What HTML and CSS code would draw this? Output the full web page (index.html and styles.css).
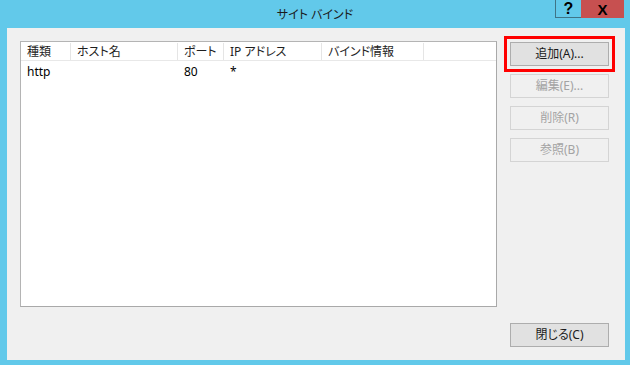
FILE: index.html
```html
<!DOCTYPE html>
<html lang="ja">
<head>
<meta charset="utf-8">
<title>サイト バインド</title>
<link rel="stylesheet" href="styles.css">
</head>
<body>
<div class="window">
  <div class="titlebar">
    <div class="spacer"></div>
    <div class="title">サイト バインド</div>
    <div class="controls">
      <div class="ctl help">?</div>
      <div class="ctl close">X</div>
    </div>
  </div>
  <div class="client">
    <div class="list">
      <div class="row head">
        <div class="cell">種類</div>
        <div class="cell">ホスト名</div>
        <div class="cell">ポート</div>
        <div class="cell">IP アドレス</div>
        <div class="cell">バインド情報</div>
      </div>
      <div class="row item">
        <div class="cell">http</div>
        <div class="cell"></div>
        <div class="cell">80</div>
        <div class="cell">*</div>
        <div class="cell"></div>
      </div>
    </div>
    <div class="side">
      <div class="btn highlight">追加(A)...</div>
      <div class="btn disabled">編集(E)...</div>
      <div class="btn disabled">削除(R)</div>
      <div class="btn disabled">参照(B)</div>
      <div class="btn closebtn">閉じる(C)</div>
    </div>
  </div>
</div>
</body>
</html>
```
FILE: styles.css
```css
html, body {
  margin: 0;
  padding: 0;
}
body {
  width: 630px;
  height: 365px;
  overflow: hidden;
  background: #62c9ea;
  font-family: "Noto Sans", "Noto Sans CJK JP", sans-serif;
  font-size: 12px;
  font-feature-settings: "palt";
  color: #000;
}
.window {
  width: 630px;
  height: 365px;
  display: flex;
  flex-direction: column;
}
.titlebar {
  height: 28px;
  display: grid;
  grid-template-columns: 1fr auto 1fr;
  flex: none;
}
.title {
  padding-top: 7px;
  line-height: 16px;
  font-size: 12px;
  color: #1b1b1b;
}
.controls {
  justify-self: end;
  align-self: start;
  display: flex;
  margin-right: 6px;
}
.ctl {
  height: 18px;
  box-sizing: border-box;
  display: flex;
  align-items: center;
  justify-content: center;
  font-family: "Liberation Sans", sans-serif;
  font-weight: bold;
  color: #000;
}
.help {
  width: 26px;
  border: 1px solid #3f7486;
  border-top: none;
  border-right: none;
  font-size: 16px;
}
.close {
  width: 43px;
  background: #c75050;
  font-size: 15px;
}
.client {
  flex: 1;
  margin: 0 5px 5px 7px;
  background: #f0f0f0;
  display: flex;
  padding: 13px 15px 13px 13px;
}
.list {
  width: 477px;
  height: 266px;
  box-sizing: border-box;
  background: #fff;
  border: 1px solid #a9a9a9;
  border-top-color: #b4b4b4;
  border-left-color: #b4b4b4;
  align-self: flex-start;
}
.row {
  display: grid;
  grid-template-columns: 50px 107px 46px 98px 102px;
}
.head {
  height: 18px;
  box-sizing: border-box;
  border-bottom: 1px solid #e8e8e8;
  margin-top: 1px;
}
.head .cell {
  border-right: 1px solid #e5e5e5;
  line-height: 17px;
  color: #1e1e1e;
}
.cell {
  padding-left: 6px;
  white-space: nowrap;
  overflow: hidden;
}
.item {
  height: 22px;
}
.item .cell {
  line-height: 22px;
}
.side {
  margin-left: 13px;
  width: 99px;
  padding-top: 1px;
  display: flex;
  flex-direction: column;
  gap: 8px;
}
.btn {
  height: 24px;
  box-sizing: border-box;
  border: 1px solid #adadad;
  background: #e1e1e1;
  display: flex;
  align-items: center;
  justify-content: center;
  line-height: 16px;
  color: #1a1a1a;
}
.disabled {
  background: #f0f0f0;
  border-color: #d4d4d4;
  color: #a3a3a3;
}
.highlight {
  position: relative;
}
.highlight::after {
  content: "";
  position: absolute;
  left: -7px;
  right: -7px;
  top: -7px;
  bottom: -7px;
  border: 3px solid #ff0000;
}
.closebtn {
  margin-top: auto;
}
```
